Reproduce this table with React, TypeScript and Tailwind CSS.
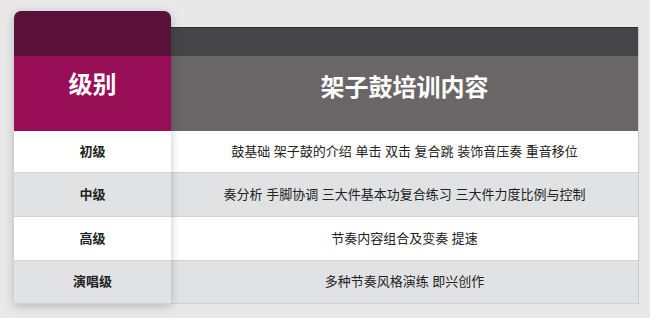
/**
 * Drum kit course table — level vs. training content
 */

const ROWS = [
  { level: "初级", content: "鼓基础 架子鼓的介绍 单击 双击 复合跳 装饰音压奏 重音移位", h: "h-[42px]" },
  { level: "中级", content: "奏分析 手脚协调 三大件基本功复合练习 三大件力度比例与控制", h: "h-[44px]" },
  { level: "高级", content: "节奏内容组合及变奏 提速", h: "h-[44px]" },
  { level: "演唱级", content: "多种节奏风格演练 即兴创作", h: "h-[43px]" },
];

const font = { fontFamily: "'Liberation Sans', 'Noto Sans CJK SC', sans-serif" };

export default function App() {
  return (
    <div className="w-[650px] h-[318px] bg-[#e8e8e8] pl-[14px] pt-[11px] overflow-hidden" style={font}>
      <div className="flex items-start">
        {/* Level column — raised card */}
        <div className="relative z-10 w-[157px] rounded-t-[7px] overflow-hidden shadow-[0_2px_10px_rgba(0,0,0,0.22)]">
          <div className="h-[45px] bg-[#5a1139]" />
          <div className="h-[75px] bg-[#990f57] flex items-center justify-center pb-[17px] text-white text-[24px] font-bold">
            级别
          </div>
          {ROWS.map((r, i) => (
            <div
              key={r.level}
              className={`${r.h} flex items-center justify-center text-[13px] font-bold text-[#222] border-b border-[#d2d2d2] ${
                i % 2 ? "bg-[#e1e2e4]" : "bg-white"
              }`}
            >
              {r.level}
            </div>
          ))}
        </div>

        {/* Content column */}
        <div className="w-[468px] mt-[16px] border-r border-[#c9c9c9]">
          <div className="h-[29px] bg-[#454446] border-t border-[#2e2e2e]" />
          <div className="h-[75px] bg-[#6a6667] flex items-center justify-center pb-[11px] text-white text-[24px] font-bold">
            架子鼓培训内容
          </div>
          {ROWS.map((r, i) => (
            <div
              key={r.level}
              className={`${r.h} flex items-center justify-center text-[13px] text-[#222] border-b border-[#d2d2d2] ${
                i % 2 ? "bg-[#e1e2e4]" : "bg-white"
              }`}
            >
              {r.content}
            </div>
          ))}
        </div>
      </div>
    </div>
  );
}
